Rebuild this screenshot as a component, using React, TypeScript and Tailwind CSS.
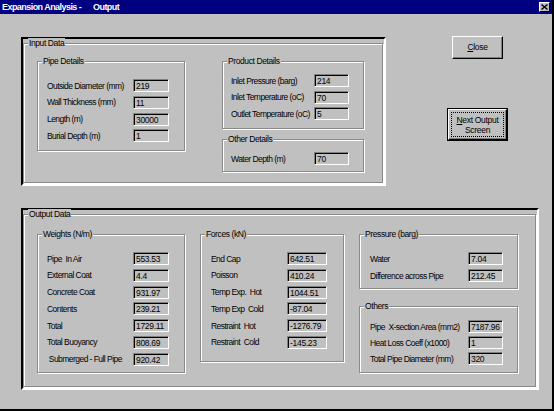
import React from 'react';

type Row = { label: string; value: string };

const font = "font-['Liberation_Sans',Arial,sans-serif]";

function TextBox({ value, width }: { value: string; width: string }) {
  return (
    <div
      className={`${width} h-[13px] shrink-0 border border-t-[#808080] border-l-[#808080] border-b-white border-r-white shadow-[inset_1px_1px_0_#000] pl-[2px] pt-[1px] text-[8.5px] leading-[10px] tracking-[-0.3px] text-black`}
    >
      {value}
    </div>
  );
}

function GroupBox({
  caption,
  className,
  children,
}: {
  caption: string;
  className: string;
  children?: React.ReactNode;
}) {
  return (
    <div
      className={`relative shrink-0 border border-[#8a8a8a] shadow-[1px_1px_0_#fff,inset_1px_1px_0_#fff] ${className}`}
    >
      {/* caption sits on the top line */}
      <span className="absolute -top-[6px] left-[4px] bg-[#c0c0c0] px-[1px] text-[8.5px] leading-[11px] tracking-[-0.4px] text-black">
        {caption}
      </span>
      {children}
    </div>
  );
}

function Rows({
  rows,
  boxWidth,
  className,
}: {
  rows: Row[];
  boxWidth: string;
  className: string;
}) {
  return (
    <div className={`flex flex-col ${className}`}>
      {rows.map((r) => (
        <div key={r.label} className="flex h-[13px] items-center justify-between">
          <span className="whitespace-pre text-[8.5px] leading-[10px] tracking-[-0.55px] text-black">
            {r.label}
          </span>
          <TextBox value={r.value} width={boxWidth} />
        </div>
      ))}
    </div>
  );
}

function Frame({
  caption,
  className,
  children,
}: {
  caption: string;
  className: string;
  children: React.ReactNode;
}) {
  return (
    <div
      className={`flex shrink-0 border-2 border-t-black border-l-black border-r-white border-b-white ${className}`}
    >
      <GroupBox caption={caption} className="mt-[4px] mr-[1px] mb-[1px] flex-1">
        {children}
      </GroupBox>
    </div>
  );
}

const pipeDetails: Row[] = [
  { label: 'Outside Diameter (mm)', value: '219' },
  { label: 'Wall Thickness (mm)', value: '11' },
  { label: 'Length (m)', value: '30000' },
  { label: 'Burial Depth (m)', value: '1' },
];

const productDetails: Row[] = [
  { label: 'Inlet Pressure (barg)', value: '214' },
  { label: 'Inlet Temperature (oC)', value: '70' },
  { label: 'Outlet Temperature (oC)', value: '5' },
];

const weights: Row[] = [
  { label: 'Pipe  In Air', value: '553.53' },
  { label: 'External Coat', value: '4.4' },
  { label: 'Concrete Coat', value: '931.97' },
  { label: 'Contents', value: '239.21' },
  { label: 'Total', value: '1729.11' },
  { label: 'Total Buoyancy', value: '808.69' },
  { label: ' Submerged - Full Pipe', value: '920.42' },
];

const forces: Row[] = [
  { label: 'End Cap', value: '642.51' },
  { label: 'Poisson', value: '410.24' },
  { label: 'Temp Exp.  Hot', value: '1044.51' },
  { label: 'Temp Exp  Cold', value: '-87.04' },
  { label: 'Restraint  Hot', value: '-1276.79' },
  { label: 'Restraint  Cold', value: '-145.23' },
];

const pressure: Row[] = [
  { label: 'Water', value: '7.04' },
  { label: 'Difference across Pipe', value: '212.45' },
];

const others: Row[] = [
  { label: 'Pipe  X-section Area (mm2)', value: '7187.96' },
  { label: 'Heat Loss Coeff (x1000)', value: '1' },
  { label: 'Total Pipe Diameter (mm)', value: '320' },
];

export default function App() {
  return (
    <div
      className={`${font} flex h-[411px] w-[554px] flex-col overflow-hidden border-r-2 border-b-2 border-black bg-[#c0c0c0]`}
    >
      {/* Title bar */}
      <div className="flex h-[14px] shrink-0 items-center justify-between bg-[#000080] pl-[2px] pr-[2px]">
        <div className="flex shrink-0 whitespace-nowrap text-[9px] font-bold leading-none tracking-[-0.55px] text-white">
          <span className="w-[91px] shrink-0">Expansion Analysis -</span>
          <span className="shrink-0">Output</span>
        </div>
        <div className="flex h-[10px] w-[11px] items-center justify-center border border-t-white border-l-white border-r-black border-b-black bg-[#c0c0c0]">
          <svg width="7" height="6" viewBox="0 0 7 6">
            <path d="M0.5 0.5 L6.5 5.5 M6.5 0.5 L0.5 5.5" stroke="#000" strokeWidth="1.4" />
          </svg>
        </div>
      </div>

      <div className="flex flex-col pl-[21px] pt-[22px]">
        <div className="flex">
          {/* Input Data */}
          <Frame caption="Input Data" className="mt-[1px] h-[149px] w-[365px]">
            <div className="flex gap-[37px] pl-[13px] pt-[17px]">
              <GroupBox caption="Pipe Details" className="h-[90px] w-[148px]">
                <Rows rows={pipeDetails} boxWidth="w-[36px]" className="gap-[3.8px] pl-[9px] pr-[15px] pt-[17px]" />
              </GroupBox>
              <div className="flex flex-col gap-[10px]">
                <GroupBox caption="Product Details" className="h-[68px] w-[142px]">
                  <Rows rows={productDetails} boxWidth="w-[35px]" className="gap-[3.5px] pl-[8px] pr-[14px] pt-[12px]" />
                </GroupBox>
                <GroupBox caption="Other Details" className="h-[33px] w-[142px]">
                  <Rows
                    rows={[{ label: 'Water Depth (m)', value: '70' }]}
                    boxWidth="w-[35px]"
                    className="pl-[8px] pr-[14px] pt-[12px]"
                  />
                </GroupBox>
              </div>
            </div>
          </Frame>

          {/* Buttons */}
          <div className="ml-[61px] flex w-[61px] flex-col">
            <button className="ml-[5px] flex h-[23px] w-[51px] items-center justify-center border border-t-white border-l-white border-r-black border-b-black shadow-[inset_-1px_-1px_0_#808080] text-[8.5px] tracking-[-0.3px] text-black">
              <span>
                <span className="underline">C</span>lose
              </span>
            </button>
            <button className="mt-[49px] flex h-[33px] w-[61px] border border-black p-0">
              <div className="flex flex-1 border border-t-white border-l-white border-r-black border-b-black shadow-[inset_-1px_-1px_0_#808080] p-[2px]">
                <div className="flex flex-1 flex-col items-center justify-center border border-dotted border-black text-[8.5px] leading-[10px] tracking-[-0.3px] text-black">
                  <span>
                    <span className="underline">N</span>ext Output
                  </span>
                  <span>Screen</span>
                </div>
              </div>
            </button>
          </div>
        </div>

        {/* Output Data */}
        <Frame caption="Output Data" className="mt-[22px] h-[182px] w-[518px]">
          <div className="flex gap-[15px] pl-[13px] pt-[19px]">
            <GroupBox caption="Weights (N/m)" className="h-[139px] w-[148px]">
              <Rows rows={weights} boxWidth="w-[36px]" className="gap-[3.8px] pl-[9px] pr-[15px] pt-[17px]" />
            </GroupBox>
            <GroupBox caption="Forces (kN)" className="h-[128px] w-[144px]">
              <Rows rows={forces} boxWidth="w-[40px]" className="gap-[3.8px] pl-[10px] pr-[16px] pt-[17px]" />
            </GroupBox>
            <div className="flex flex-col gap-[17px]">
              <GroupBox caption="Pressure (barg)" className="h-[55px] w-[159px]">
                <Rows rows={pressure} boxWidth="w-[35px]" className="gap-[4px] pl-[10px] pr-[14px] pt-[17px]" />
              </GroupBox>
              <GroupBox caption="Others" className="h-[67px] w-[159px]">
                <Rows rows={others} boxWidth="w-[35px]" className="gap-[3px] pl-[10px] pr-[14px] pt-[13px]" />
              </GroupBox>
            </div>
          </div>
        </Frame>
      </div>
    </div>
  );
}
